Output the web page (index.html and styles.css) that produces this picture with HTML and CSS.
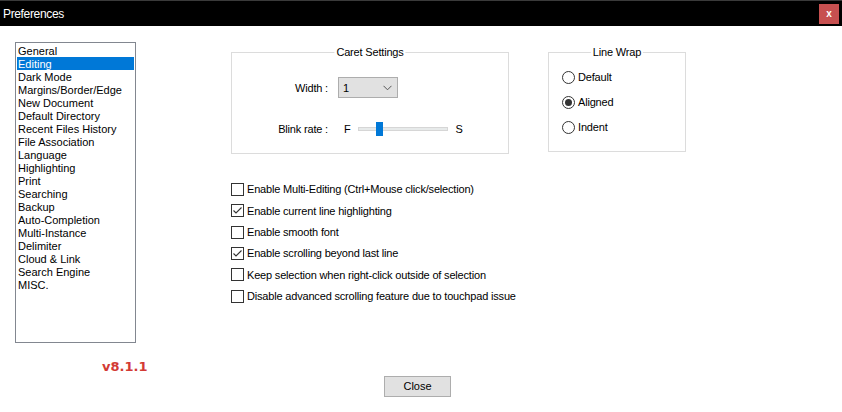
FILE: index.html
```html
<!DOCTYPE html>
<html>
<head>
<meta charset="utf-8">
<link rel="stylesheet" href="styles.css">
</head>
<body>
<div class="titlebar">
  <span class="title">Preferences</span>
  <span class="close">x</span>
</div>
<div class="content">
  <div class="sidebar">
    <ul class="listbox">
      <li>General</li>
      <li class="selected">Editing</li>
      <li>Dark Mode</li>
      <li>Margins/Border/Edge</li>
      <li>New Document</li>
      <li>Default Directory</li>
      <li>Recent Files History</li>
      <li>File Association</li>
      <li>Language</li>
      <li>Highlighting</li>
      <li>Print</li>
      <li>Searching</li>
      <li>Backup</li>
      <li>Auto-Completion</li>
      <li>Multi-Instance</li>
      <li>Delimiter</li>
      <li>Cloud &amp; Link</li>
      <li>Search Engine</li>
      <li>MISC.</li>
    </ul>
    <div class="version">v8.1.1</div>
  </div>
  <div class="main">
    <div class="groups">
      <div class="group caret">
        <div class="legend">Caret Settings</div>
        <div class="caret-grid">
          <span class="label">Width :</span>
          <div class="combo">
            <span>1</span>
            <svg class="chev" width="9" height="6" viewBox="0 0 9 6"><path d="M0.5 0.8 L4.5 4.8 L8.5 0.8" fill="none" stroke="#555" stroke-width="1"/></svg>
          </div>
          <span class="label">Blink rate :</span>
          <div class="slider-row">
            <span>F</span>
            <div class="track"><div class="thumb"></div></div>
            <span>S</span>
          </div>
        </div>
      </div>
      <div class="group wrap">
        <div class="legend">Line Wrap</div>
        <div class="radios">
          <div class="radio"><span class="circle"></span>Default</div>
          <div class="radio"><span class="circle on"></span>Aligned</div>
          <div class="radio"><span class="circle"></span>Indent</div>
        </div>
      </div>
    </div>
    <div class="checks">
      <div class="check"><span class="box"></span>Enable Multi-Editing (Ctrl+Mouse click/selection)</div>
      <div class="check"><span class="box"><svg width="11" height="11" viewBox="0 0 11 11"><path d="M1.5 5.5 L4 8 L9.5 2.5" fill="none" stroke="#333" stroke-width="1.1"/></svg></span>Enable current line highlighting</div>
      <div class="check"><span class="box"></span>Enable smooth font</div>
      <div class="check"><span class="box"><svg width="11" height="11" viewBox="0 0 11 11"><path d="M1.5 5.5 L4 8 L9.5 2.5" fill="none" stroke="#333" stroke-width="1.1"/></svg></span>Enable scrolling beyond last line</div>
      <div class="check"><span class="box"></span>Keep selection when right-click outside of selection</div>
      <div class="check"><span class="box"></span>Disable advanced scrolling feature due to touchpad issue</div>
    </div>
    <div class="actions">
      <button class="btn">Close</button>
    </div>
  </div>
</div>
</body>
</html>
```

FILE: styles.css
```css
* { box-sizing: border-box; }

body {
  margin: 0;
  width: 842px;
  height: 412px;
  overflow: hidden;
  background: #fff;
  font-family: "Liberation Sans", Arial, sans-serif;
  font-size: 11px;
  color: #000;
}

.titlebar {
  height: 26px;
  background: #000;
  border-top: 1px solid #3a3a3a;
  display: flex;
  align-items: center;
  padding: 0 3px 0 3px;
}

.title {
  color: #fff;
  font-size: 12px;
  letter-spacing: -0.35px;
}

.close {
  margin-left: auto;
  width: 20px;
  height: 20px;
  background: #c75050;
  color: #fff;
  font-size: 10px;
  font-weight: bold;
  display: flex;
  align-items: center;
  justify-content: center;
}

.content {
  display: flex;
  padding-left: 15px;
}

.sidebar {
  width: 121px;
  flex: none;
  padding-top: 16px;
}

.listbox {
  margin: 0;
  padding: 1px;
  list-style: none;
  height: 301px;
  border: 1px solid #828790;
}

.listbox li {
  height: 13px;
  line-height: 13px;
  padding: 1px 0 0 1px;
  white-space: nowrap;
}

.listbox li.selected {
  background: #0078d7;
  color: #fff;
}

.version {
  margin-top: 15px;
  padding-left: 87px;
  font-family: "DejaVu Sans", sans-serif;
  font-weight: bold;
  font-size: 13px;
  line-height: 17px;
  color: #d33b35;
  white-space: nowrap;
}

.main {
  margin-left: 95px;
  padding-top: 26px;
  letter-spacing: -0.18px;
}

.groups {
  display: flex;
  gap: 39px;
  align-items: flex-start;
}

.group {
  position: relative;
  border: 1px solid #dcdcdc;
}

.caret { width: 278px; height: 102px; }
.wrap { width: 138px; height: 100px; }

.legend {
  position: absolute;
  top: -8px;
  left: 50%;
  transform: translateX(-50%);
  background: #fff;
  padding: 0 2px;
  line-height: 14px;
  white-space: nowrap;
}

.caret-grid {
  display: grid;
  grid-template-columns: 96px auto;
  column-gap: 10px;
  row-gap: 20px;
  padding-top: 24px;
  align-items: center;
  justify-items: start;
}

.label { justify-self: end; }

.combo {
  width: 60px;
  height: 21px;
  background: #e1e1e1;
  border: 1px solid #adadad;
  display: flex;
  align-items: center;
  justify-content: space-between;
  padding: 0 5px 0 4px;
}

.slider-row {
  display: flex;
  align-items: center;
  height: 21px;
  padding-left: 6px;
}

.track {
  position: relative;
  width: 90px;
  height: 4px;
  background: #e7eaea;
  border: 1px solid #d6d6d6;
  margin: 0 8px 0 7px;
}

.thumb {
  position: absolute;
  left: 17px;
  top: -6px;
  width: 7px;
  height: 14px;
  background: #0078d7;
}

.radios {
  display: flex;
  flex-direction: column;
  gap: 9px;
  padding: 16px 0 0 13px;
}

.radio {
  display: flex;
  align-items: center;
  height: 16px;
  gap: 3px;
}

.circle {
  width: 13px;
  height: 13px;
  border: 1px solid #333;
  border-radius: 50%;
  display: grid;
  place-items: center;
}

.circle.on::after {
  content: "";
  width: 7px;
  height: 7px;
  border-radius: 50%;
  background: #333;
}

.checks {
  margin-top: 24.6px;
  display: flex;
  flex-direction: column;
}

.check {
  height: 21.4px;
  display: flex;
  align-items: center;
  gap: 3px;
  white-space: nowrap;
}

.box {
  width: 13px;
  height: 13px;
  border: 1px solid #333;
  display: grid;
  place-items: center;
}

.box svg { display: block; }

.actions {
  margin-top: 69px;
  padding-left: 153px;
}

.btn {
  width: 67px;
  height: 21px;
  background: #e1e1e1;
  border: 1px solid #adadad;
  font: inherit;
  font-size: 11px;
  padding: 0;
  color: #000;
}
```
